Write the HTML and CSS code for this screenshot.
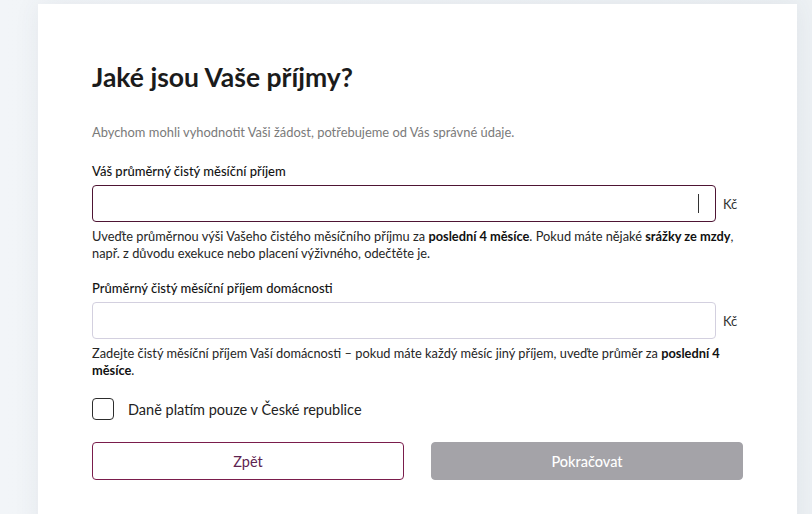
FILE: index.html
```html
<!DOCTYPE html>
<html lang="cs">
<head>
<meta charset="utf-8">
<title>Jaké jsou Vaše příjmy?</title>
<link rel="stylesheet" href="styles.css">
</head>
<body>
<div class="page">
  <main class="card">
    <h1 class="title">Jaké jsou Vaše příjmy?</h1>
    <p class="subtitle">Abychom mohli vyhodnotit Vaši žádost, potřebujeme od Vás správné údaje.</p>

    <div class="field">
      <label class="label">Váš průměrný čistý měsíční příjem</label>
      <div class="input-row">
        <div class="input input-focused"><span class="caret"></span></div>
        <span class="unit">Kč</span>
      </div>
      <p class="help">Uveďte průměrnou výši Vašeho čistého měsíčního příjmu za <b>poslední 4 měsíce</b>. Pokud máte nějaké <b>srážky ze mzdy</b>,<br>např. z důvodu exekuce nebo placení výživného, odečtěte je.</p>
    </div>

    <div class="field field-second">
      <label class="label">Průměrný čistý měsíční příjem domácnosti</label>
      <div class="input-row">
        <div class="input"></div>
        <span class="unit">Kč</span>
      </div>
      <p class="help">Zadejte čistý měsíční příjem Vaší domácnosti – pokud máte každý měsíc jiný příjem, uveďte průměr za <b>poslední 4<br>měsíce</b>.</p>
    </div>

    <div class="check-row">
      <span class="checkbox"></span>
      <span class="check-label">Daně platím pouze v České republice</span>
    </div>

    <div class="buttons">
      <button class="btn btn-back">Zpět</button>
      <button class="btn btn-next">Pokračovat</button>
    </div>
  </main>
</div>
</body>
</html>
```
FILE: styles.css
```css
* { box-sizing: border-box; }

html, body {
  margin: 0;
  height: 514px;
  overflow: hidden;
}

body {
  background: linear-gradient(90deg, #f2f5f8 0%, #edf1f4 100%);
  font-family: "Lato", "Open Sans", sans-serif;
  color: #222;
}

.page {
  padding: 4px 15px 0 38px;
}

.card {
  background: #fff;
  padding: 55px 54px 40px 54px;
  min-height: 600px;
  box-shadow: 0 0 24px rgba(60, 80, 100, 0.08);
}

.title {
  margin: 0;
  font-size: 26.5px;
  line-height: 36px;
  font-weight: 700;
  color: #1b1b1b;
}

.subtitle {
  margin: 28px 0 0;
  font-size: 12.9px;
  line-height: 18px;
  color: #7a7a7a;
}

.field {
  margin-top: 21px;
}

.field-second {
  margin-top: 17px;
}

.label {
  display: block;
  font-size: 13px;
  line-height: 18px;
  font-weight: 500;
  color: #141414;
}

.input-row {
  display: flex;
  align-items: center;
  margin-top: 5px;
}

.input {
  flex: 1;
  height: 37px;
  border: 1px solid #d3d0df;
  border-radius: 4px;
  background: #fff;
  display: flex;
  align-items: center;
  justify-content: flex-end;
  padding-right: 16px;
}

.input-focused {
  border-color: #4e1534;
}

.caret {
  width: 1px;
  height: 19px;
  background: #333;
}

.unit {
  width: 27px;
  padding-left: 7px;
  font-size: 13px;
  color: #333;
}

.help {
  margin: 6px 0 0;
  font-size: 12.8px;
  line-height: 17px;
  color: #262626;
}

.help b {
  font-weight: 700;
  color: #111;
}

.check-row {
  display: flex;
  align-items: center;
  gap: 14px;
  margin-top: 19px;
}

.checkbox {
  width: 22px;
  height: 22px;
  border: 1.5px solid #2d2d2d;
  border-radius: 4px;
}

.check-label {
  font-size: 14.5px;
  color: #222;
}

.buttons {
  display: grid;
  grid-template-columns: 1fr 1fr;
  gap: 27px;
  margin-top: 22px;
}

.btn {
  height: 38px;
  border-radius: 4px;
  font-family: inherit;
  font-size: 14.5px;
}

.btn-back {
  background: #fff;
  border: 1px solid #7a1d4c;
  color: #5e2350;
}

.btn-next {
  background: #a4a3a8;
  border: 1px solid #a4a3a8;
  color: #fff;
  font-weight: 500;
}
```
